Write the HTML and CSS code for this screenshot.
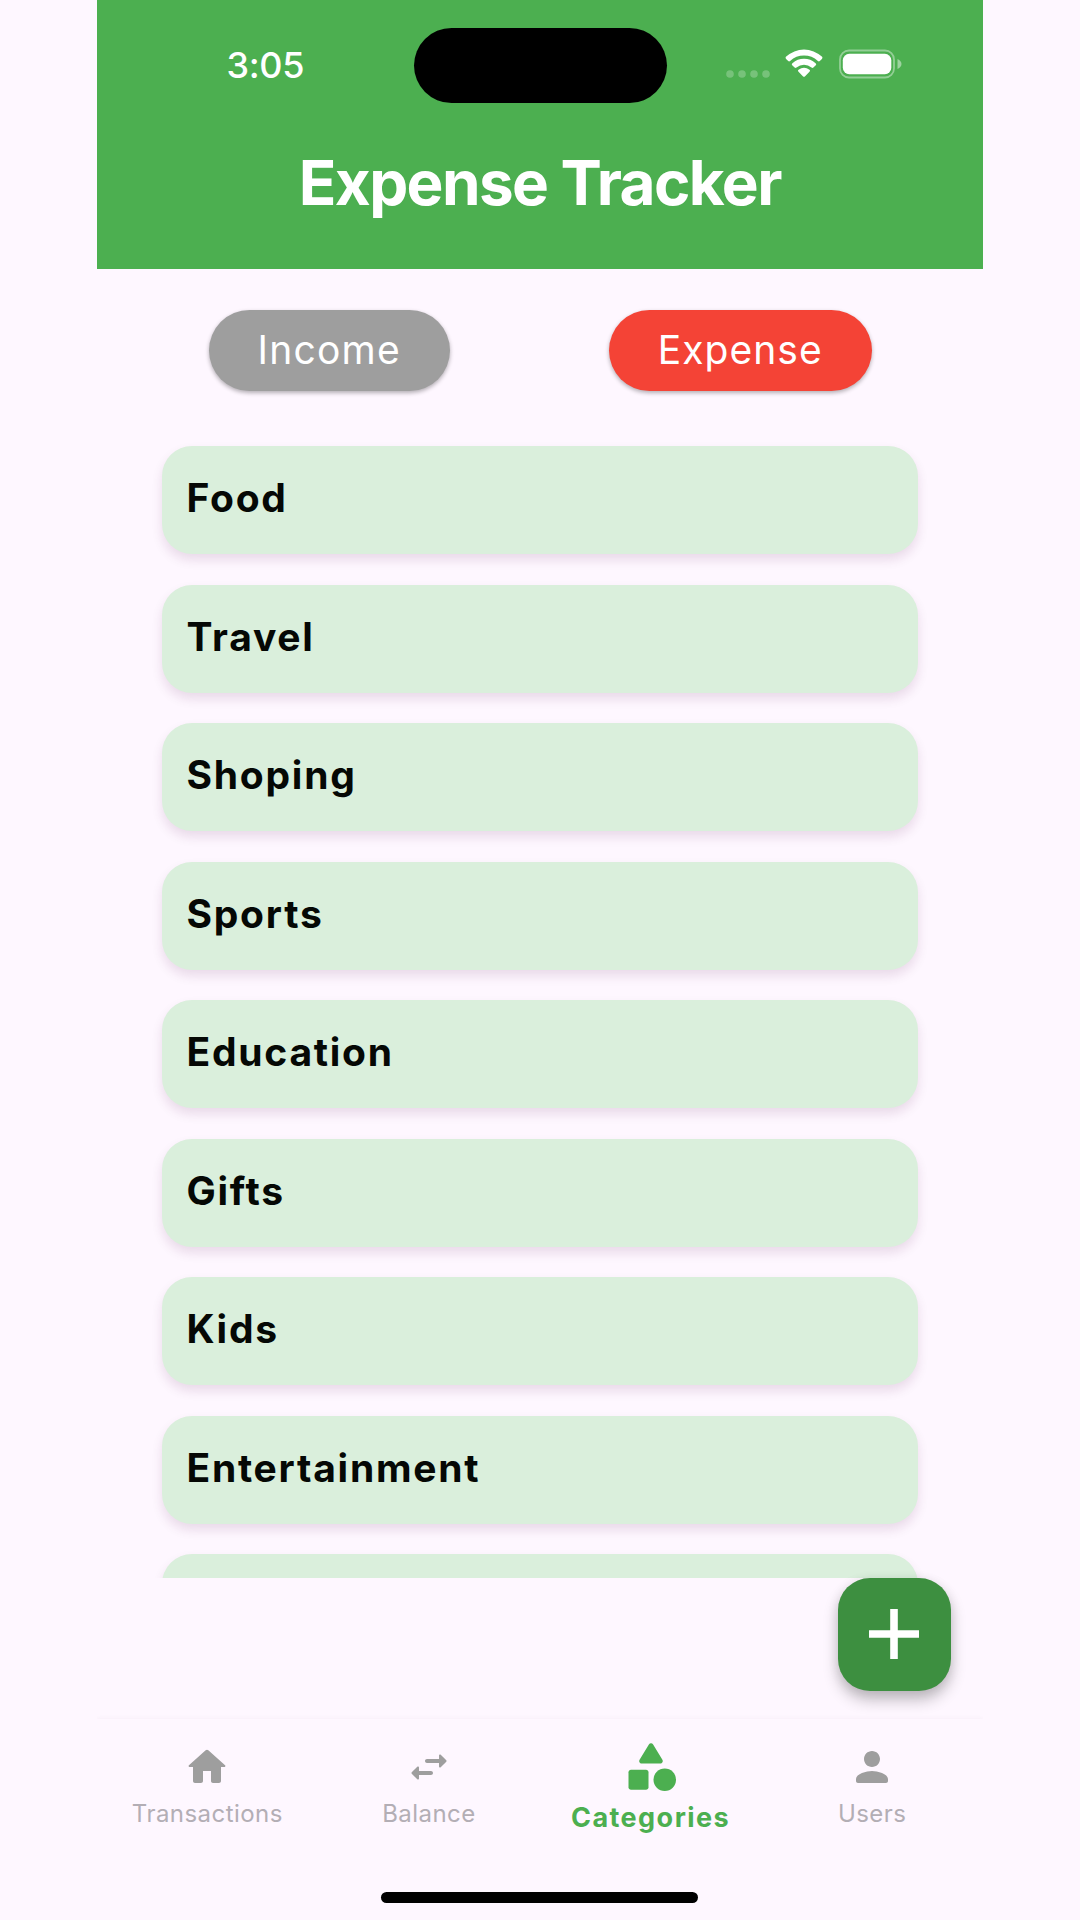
FILE: index.html
```html
<!DOCTYPE html>
<html lang="en">
<head>
<meta charset="utf-8">
<title>Expense Tracker</title>
<link rel="stylesheet" href="styles.css">
</head>
<body>
<div class="app">
  <header class="header">
    <div class="status">
      <span class="time">3:05</span>
      <span class="island"></span>
      <div class="indicators">
        <svg class="dots" viewBox="0 0 46 10"><circle cx="5" cy="5" r="3.800"/><circle cx="17" cy="5" r="3.800"/><circle cx="29" cy="5" r="3.800"/><circle cx="41" cy="5" r="3.800"/></svg>
        <svg class="wifi" viewBox="0 0 38 29"><path d="M1.1 9.9Q0 8.7 1.2 7.6A26 26 0 0 1 36.8 7.6Q38 8.7 36.9 9.9L34.8 12Q33.900 12.9 32.900 12A20.500 20.500 0 0 0 5.100 12Q4.100 12.900 3.200 12Z"/><path d="M7.200 16.300Q6.200 15.200 7.400 14.200A17.500 17.500 0 0 1 30.600 14.200Q31.800 15.200 30.800 16.300L28.400 18.500Q27.500 19.300 26.500 18.500A12 12 0 0 0 11.500 18.500Q10.500 19.300 9.600 18.500Z"/><path d="M13.300 22.400Q12.500 21.500 13.500 20.800A9 9 0 0 1 24.500 20.800Q25.500 21.500 24.700 22.400L19.900 27.400Q19 28.200 18.100 27.400Z"/></svg>
        <svg class="battery" viewBox="0 0 63 30"><rect class="battery-shell" x="1" y="1.500" width="54" height="27" rx="9"/><rect x="3.800" y="4.800" width="48.500" height="20.400" rx="6.500"/><path class="battery-cap" d="M58.500 10Q62.500 12 62.500 15Q62.500 18 58.500 20Z"/></svg>
      </div>
    </div>
    <h1 class="title">Expense Tracker</h1>
  </header>

  <main class="content">
    <div class="tabs">
      <button class="pill pill-income">Income</button>
      <button class="pill pill-expense">Expense</button>
    </div>
    <ul class="list">
      <li class="card">Food</li>
      <li class="card">Travel</li>
      <li class="card">Shoping</li>
      <li class="card">Sports</li>
      <li class="card">Education</li>
      <li class="card">Gifts</li>
      <li class="card">Kids</li>
      <li class="card">Entertainment</li>
      <li class="card"></li>
    </ul>
    <button class="fab" aria-label="Add"><svg viewBox="0 0 50 50"><path d="M21.200 0h7.600v21.200H50v7.600H28.800V50h-7.600V28.800H0v-7.600h21.200z"/></svg></button>
  </main>

  <footer class="footer">
    <nav class="nav">
      <a class="tab"><svg class="icon" viewBox="0 0 24 24"><path d="M10 19v-5h4v5c0 .55.45 1 1 1h3c.55 0 1-.45 1-1v-7h1.700c.46 0 .68-.57.33-.87L12.670 3.600c-.38-.34-.96-.34-1.340 0l-8.360 7.530c-.34.3-.13.87.33.87H5v7c0 .55.45 1 1 1h3c.55 0 1-.45 1-1z"/></svg><span class="label">Transactions</span></a>
      <a class="tab"><svg class="icon" viewBox="0 0 24 24"><path d="M6.140 11.860l-2.780 2.790c-.19.2-.19.51 0 .71l2.780 2.790c.31.310.85.090.85-.360V16H13c.55 0 1-.45 1-1s-.45-1-1-1H6.990v-1.790c0-.45-.54-.67-.85-.35zM20.650 8.650l-2.780-2.790c-.310-.320-.85-.1-.85.350V8H11c-.55 0-1 .45-1 1s.45 1 1 1h6.010v1.790c0 .45.54.67.85.350l2.780-2.790c.2-.190.2-.510.010-.700z"/></svg><span class="label">Balance</span></a>
      <a class="tab tab-active"><svg class="icon icon-active" viewBox="0 0 24 24"><path d="M11.150 3.400L7.430 9.480c-.41.66.07 1.520.85 1.520h7.430c.78 0 1.260-.86.850-1.520L12.850 3.400c-.39-.64-1.310-.64-1.700 0z"/><circle cx="17.500" cy="17.500" r="4.500"/><path d="M4 21.500h6c.55 0 1-.45 1-1v-6c0-.55-.45-1-1-1H4c-.55 0-1 .45-1 1v6c0 .55.45 1 1 1z"/></svg><span class="label label-active">Categories</span></a>
      <a class="tab"><svg class="icon" viewBox="0 0 24 24"><path d="M12 12c2.210 0 4-1.790 4-4s-1.790-4-4-4-4 1.790-4 4 1.790 4 4 4zm0 2c-2.670 0-8 1.340-8 4v1c0 .55.45 1 1 1h14c.55 0 1-.45 1-1v-1c0-2.660-5.330-4-8-4z"/></svg><span class="label">Users</span></a>
    </nav>
    <div class="home-bar"></div>
  </footer>
</div>
</body>
</html>
```
FILE: styles.css
```css
* { box-sizing: border-box; }
body {
  margin: 0;
  background: #fef7ff;
  font-family: Inter, "Liberation Sans", sans-serif;
}
.app {
  width: 886.500px;
  height: 1920px;
  margin: 0 0 0 96.500px;
  display: flex;
  flex-direction: column;
  overflow: hidden;
}
.header {
  height: 269px;
  background: #4caf50;
  color: #fff;
}
.status {
  display: grid;
  grid-template-columns: 317px 253px 316.500px;
  padding-top: 28px;
}
.time {
  padding-left: 130px;
  font-size: 36px;
  font-weight: 550;
  line-height: 74px;
  letter-spacing: -.350px;
}
.island {
  height: 74.500px;
  border-radius: 38px;
  background: #000;
}
.indicators {
  display: flex;
  padding-left: 58px;
  fill: #fff;
}
.dots { width: 46px; height: 10px; margin-top: 41px; opacity: .24; }
.wifi { width: 38px; height: 29px; margin: 21px 0 0 14px; }
.battery { width: 63px; height: 30px; margin: 21px 0 0 16px; }
.battery-shell { fill: none; stroke: #fff; stroke-width: 1.800; opacity: .4; }
.battery-cap { opacity: .45; }
.title {
  margin: 42px 0 0;
  text-align: center;
  font-size: 62px;
  font-weight: 700;
  line-height: 76px;
  letter-spacing: -1.600px;
}
.content {
  position: relative;
  height: 1450px;
}
.tabs {
  display: flex;
  justify-content: space-between;
  padding: 40.500px 111.500px 0 112.500px;
}
.pill {
  width: 240.500px;
  height: 81px;
  padding: 0 0 2px;
  border: 0;
  border-radius: 41px;
  color: #fff;
  font: 400 39px/79px Inter, sans-serif;
  letter-spacing: 1.200px;
  box-shadow: 0 2px 4px rgba(0, 0, 0, .3);
}
.pill-income { background: #9e9e9e; }
.pill-expense { width: 262.500px; background: #f44336; letter-spacing: 1.050px; }
.list {
  display: flex;
  flex-direction: column;
  gap: 30.500px;
  height: 1148px;
  margin: 39.500px 0 0;
  padding: 16px 65px 0 65.500px;
  overflow: hidden;
  list-style: none;
}
.card {
  flex: none;
  height: 108px;
  padding-left: 24.500px;
  border-radius: 30px;
  background: #daefdc;
  box-shadow: 0 6px 11px rgba(80, 20, 70, .12);
  color: #050805;
  font-size: 39px;
  font-weight: 650;
  line-height: 103px;
  letter-spacing: 1.750px;
}
.fab {
  position: absolute;
  right: 32px;
  top: 1308.500px;
  display: grid;
  place-items: center;
  width: 113.500px;
  height: 113.500px;
  padding: 0;
  border: 0;
  border-radius: 32px;
  background: #3d8f40;
  box-shadow: 0 9px 15px rgba(0, 0, 0, .24), 0 2px 12px rgba(0, 0, 0, .08);
}
.fab svg { width: 50px; height: 50px; fill: #fff; }
.footer {
  height: 201px;
  box-shadow: 0 0 5px rgba(80, 40, 80, .05);
}
.nav {
  display: grid;
  grid-template-columns: repeat(4, 1fr);
  height: 173px;
}
.tab {
  display: flex;
  flex-direction: column;
  align-items: center;
  padding-top: 24px;
  color: #b3aeb5;
}
.tab-active { padding-top: 17px; color: #4caf50; }
.icon { width: 48px; height: 48px; fill: #9e9e9e; }
.icon-active { width: 60px; height: 60px; fill: #4caf50; }
.label { font-size: 24px; line-height: 30px; margin-top: 8px; letter-spacing: .450px; }
.label-active { font-size: 27px; font-weight: 700; line-height: 34px; margin-top: 5px; letter-spacing: 1.450px; }
.home-bar {
  width: 317px;
  height: 11px;
  margin: 0 auto;
  border-radius: 6px;
  background: #000;
}
```
